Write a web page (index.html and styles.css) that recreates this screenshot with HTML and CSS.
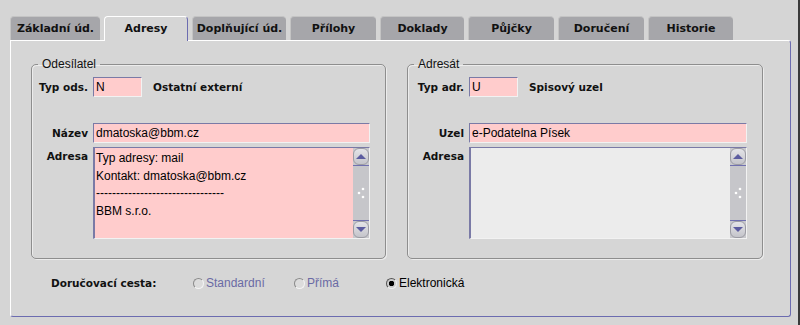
FILE: index.html
```html
<!DOCTYPE html>
<html lang="cs">
<head>
  <meta charset="UTF-8">
  <title>Adresy</title>
  <link rel="stylesheet" href="styles.css">
</head>
<body>
  <div class="screen">
    <div class="tabs">
      <div class="tab w90">Základní úd.</div>
      <div class="tab active w84">Adresy</div>
      <div class="tab w94">Doplňující úd.</div>
      <div class="tab w86">Přílohy</div>
      <div class="tab w84">Doklady</div>
      <div class="tab w86">Půjčky</div>
      <div class="tab w86">Doručení</div>
      <div class="tab w85">Historie</div>
    </div>

    <div class="panel">
      <div class="groups">
        <fieldset class="group">
          <legend>Odesílatel</legend>
          <div class="row">
            <label>Typ ods.</label>
            <div class="field short">N</div>
            <span class="desc">Ostatní externí</span>
          </div>
          <div class="row gap">
            <label>Název</label>
            <div class="field">dmatoska@bbm.cz</div>
          </div>
          <div class="row top">
            <label>Adresa</label>
            <div class="memo">
              <div class="memo-text">
                <div>Typ adresy: mail</div>
                <div>Kontakt: dmatoska@bbm.cz</div>
                <div>--------------------------------</div>
                <div>BBM s.r.o.</div>
              </div>
              <div class="scroll">
                <div class="sbtn"><span class="arrow up"></span></div>
                <div class="track">
                  <svg width="8" height="14" viewBox="0 0 8 14"><circle cx="6" cy="3" r="1.3" fill="#fff"/><circle cx="2" cy="7" r="1.3" fill="#fff"/><circle cx="6" cy="11" r="1.3" fill="#fff"/></svg>
                </div>
                <div class="sbtn"><span class="arrow down"></span></div>
              </div>
            </div>
          </div>
        </fieldset>

        <fieldset class="group">
          <legend>Adresát</legend>
          <div class="row">
            <label>Typ adr.</label>
            <div class="field short">U</div>
            <span class="desc">Spisový uzel</span>
          </div>
          <div class="row gap">
            <label>Uzel</label>
            <div class="field">e-Podatelna Písek</div>
          </div>
          <div class="row top">
            <label>Adresa</label>
            <div class="memo empty">
              <div class="memo-text"></div>
              <div class="scroll">
                <div class="sbtn"><span class="arrow up"></span></div>
                <div class="track">
                  <svg width="8" height="14" viewBox="0 0 8 14"><circle cx="6" cy="3" r="1.3" fill="#fff"/><circle cx="2" cy="7" r="1.3" fill="#fff"/><circle cx="6" cy="11" r="1.3" fill="#fff"/></svg>
                </div>
                <div class="sbtn"><span class="arrow down"></span></div>
              </div>
            </div>
          </div>
        </fieldset>
      </div>

      <div class="route">
        <span class="route-label">Doručovací cesta:</span>
        <span class="radio disabled w101"><span class="dot"></span>Standardní</span>
        <span class="radio disabled w92"><span class="dot"></span>Přímá</span>
        <span class="radio checked"><span class="dot"></span>Elektronická</span>
      </div>
    </div>
  </div>
</body>
</html>
```

FILE: styles.css
```css
body {
  margin: 0;
  background: #d5d5d5;
  font-family: "Liberation Sans", Arial, sans-serif;
  font-size: 12px;
  color: #000;
}
.screen {
  width: 798px;
  height: 325px;
  border-right: 2px solid #3a3a3a;
  overflow: hidden;
}
.tabs {
  display: flex;
  gap: 4px;
  margin: 16px 0 0 10px;
  height: 24px;
  position: relative;
  z-index: 1;
}
.tab {
  box-sizing: border-box;
  height: 24px;
  background: #a6a6aa;
  border-top: 1px solid #c4c4c4;
  border-left: 1px solid #c4c4c4;
  border-radius: 4px 4px 0 0;
  font-family: "DejaVu Sans", Verdana, sans-serif;
  font-weight: bold;
  font-size: 11px;
  color: #111;
  text-align: center;
  line-height: 24px;
}
.tab.active {
  background: #d6d6d6;
  border-top: 1px solid #fff;
  border-left: 1px solid #fff;
  border-right: 1px solid #6c6cb0;
  height: 25px;
}
.w84 { width: 84px; }
.w85 { width: 85px; }
.w86 { width: 86px; }
.w90 { width: 90px; }
.w94 { width: 94px; }

.panel {
  box-sizing: border-box;
  margin-left: 10px;
  width: 781px;
  height: 277px;
  background: #d6d6d6;
  border-top: 1px solid #fff;
  border-left: 1px solid #fff;
  border-right: 1px solid #6c6cb0;
  border-bottom: 1px solid #6c6cb0;
  border-radius: 0 3px 3px 3px;
  padding: 16px 0 0 20px;
}
.groups {
  display: grid;
  grid-template-columns: 355px 356px;
  column-gap: 21px;
}
.group {
  margin: 0;
  padding: 6px 15px 19px 4px;
  border: 1px solid #8e8e8e;
  border-radius: 5px;
  box-shadow: 1px 1px 0 #ececec, inset 1px 1px 0 #ececec;
  min-width: 0;
}
.group legend {
  margin-left: 2px;
  padding: 0 4px;
  line-height: 14px;
  color: #111;
}
.row {
  display: flex;
  align-items: center;
  height: 20px;
}
.row.gap {
  margin-top: 26px;
}
.row.top {
  align-items: flex-start;
  height: auto;
  margin-top: 4px;
}
.row label {
  width: 52px;
  margin-right: 5px;
  text-align: right;
  font-family: "DejaVu Sans", Verdana, sans-serif;
  font-weight: bold;
  font-size: 10.5px;
  color: #111;
}
.row.top label {
  margin-top: 3px;
}
.field {
  box-sizing: border-box;
  flex: 1;
  height: 20px;
  line-height: 18px;
  padding-left: 2px;
  background: #ffcccc;
  border-top: 1px solid #7a7aa6;
  border-left: 1px solid #7a7aa6;
  border-right: 1px solid #f2f2f2;
  border-bottom: 1px solid #f2f2f2;
}
.field.short {
  flex: none;
  width: 49px;
}
.desc {
  margin-left: 11px;
  font-family: "DejaVu Sans", Verdana, sans-serif;
  font-weight: bold;
  font-size: 10.5px;
  color: #111;
}
.memo {
  box-sizing: border-box;
  flex: 1;
  height: 92px;
  display: flex;
  background: #ffcccc;
  border-top: 1px solid #7a7aa6;
  border-left: 2px solid #7a7aa6;
  border-right: 1px solid #f2f2f2;
  border-bottom: 1px solid #f2f2f2;
}
.memo.empty {
  background: #ececec;
}
.memo-text {
  flex: 1;
  padding: 2px 1px;
  line-height: 17.5px;
  font-size: 12px;
}
.scroll {
  width: 16px;
  display: flex;
  flex-direction: column;
  background: #c8c8cc;
}
.sbtn {
  box-sizing: border-box;
  height: 17px;
  background: linear-gradient(#e4e4e8, #c4c4ca);
  border: 1px solid #9c9ca4;
  border-radius: 6px;
  display: flex;
  align-items: center;
  justify-content: center;
}
.arrow {
  width: 0;
  height: 0;
  border-left: 5px solid transparent;
  border-right: 5px solid transparent;
}
.arrow.up {
  border-bottom: 5px solid #5c5ca0;
}
.arrow.down {
  border-top: 5px solid #5c5ca0;
}
.track {
  flex: 1;
  background: #c6c6ca;
  border-top: 1px solid #7070b0;
  border-bottom: 1px solid #7070b0;
  display: flex;
  align-items: center;
  justify-content: center;
}
.route {
  display: flex;
  align-items: center;
  height: 16px;
  margin-top: 16px;
  padding-left: 20px;
}
.route-label {
  width: 142px;
  font-family: "DejaVu Sans", Verdana, sans-serif;
  font-weight: bold;
  font-size: 10.5px;
  color: #111;
}
.radio {
  display: flex;
  align-items: center;
  font-size: 12px;
}
.w101 { width: 101px; }
.w92 { width: 92px; }
.radio .dot {
  box-sizing: border-box;
  width: 11px;
  height: 11px;
  margin-right: 2px;
  border-radius: 50%;
  border: 1px solid #8a8a8a;
  border-right-color: #f4f4f4;
  border-bottom-color: #f4f4f4;
  background: #dcdcdc;
}
.radio.disabled {
  color: #6a6aa4;
}
.radio.checked .dot {
  border-color: #555;
  border-right-color: #eee;
  border-bottom-color: #eee;
  background: radial-gradient(circle, #000 0 2.5px, #ccc 3px);
}
```
